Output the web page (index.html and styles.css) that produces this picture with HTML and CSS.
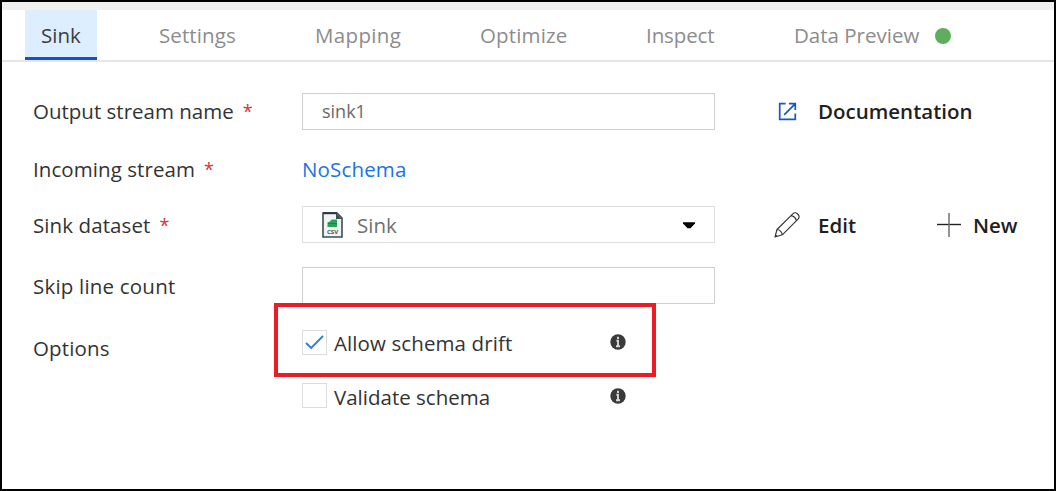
FILE: index.html
```
<!DOCTYPE html>
<html lang="en">
<head>
<meta charset="utf-8">
<title>Sink</title>
<link rel="stylesheet" href="styles.css">
</head>
<body>
<main class="panel">
  <div class="strip"></div>
  <nav class="tabs">
    <a class="tab active"><span class="t-sink">Sink</span></a>
    <a class="tab"><span class="t-settings">Settings</span></a>
    <a class="tab"><span class="t-mapping">Mapping</span></a>
    <a class="tab"><span class="t-optimize">Optimize</span></a>
    <a class="tab"><span class="t-inspect">Inspect</span></a>
    <a class="tab"><span class="t-preview">Data Preview</span><i class="dot"></i></a>
  </nav>
  <form class="form">
    <div class="row row-name">
      <label class="label"><span class="l-output">Output stream name</span><b class="req">*</b></label>
      <div class="field input"><span class="value">sink1</span></div>
      <div class="actions">
        <svg class="ext" width="19" height="19" viewBox="0 0 20 20" fill="none" stroke="#1458c8" stroke-width="1.8"><path d="M8 1.8H1.8V18.2H18.2V12M11.5 1.8H18.2V8.5M18 2L6.5 13.5"/></svg>
        <span class="action doc">Documentation</span>
      </div>
    </div>
    <div class="row row-stream">
      <label class="label"><span class="l-incoming">Incoming stream</span><b class="req">*</b></label>
      <a class="link">NoSchema</a>
    </div>
    <div class="row row-dataset">
      <label class="label"><span class="l-dataset">Sink dataset</span><b class="req">*</b></label>
      <div class="field select">
        <svg class="csv" width="21" height="26" viewBox="0 0 21 26"><path d="M1 1H15L20 6V25H1Z" fill="#f2f4f4" stroke="#3c4d52" stroke-width="1.6"/><path d="M1 1.2H15" stroke="#25363b" stroke-width="2"/><path d="M14 1L20 7H14Z" fill="#3c4d52"/><path d="M5.500 15V10.500L8 9.500L9.500 7.500H15V15Z" fill="#2aa35a"/><path d="M6 11.5H15" stroke="#17823f" stroke-width=".8"/><text class="csv-text" x="5" y="22">CSV</text></svg>
        <span class="select-value">Sink</span>
        <svg class="caret" width="12" height="7" viewBox="0 0 12 7"><path d="M0 .3H12V1.5L7.5 6.3H4.5L0 1.5Z" fill="#000"/></svg>
      </div>
      <div class="actions">
        <svg class="pencil" width="26" height="26" viewBox="0 0 26 26" fill="none" stroke="#333" stroke-width="1.15" stroke-linejoin="round"><path d="M1 25L3 17.5L18.8 1.8C20 .6 22 .5 23.6 2C25.300 3.600 25.300 5.800 24 7.200L8.300 22.800ZM3 17.500C5.500 17.500 8 20 8.300 22.800M17 3.600C19.500 3.800 22 6 22.300 8.800M1.500 23L3 24.500"/></svg>
        <span class="action edit">Edit</span>
        <svg class="plus" width="24" height="24" viewBox="0 0 24 24" fill="none" stroke="#222" stroke-width="1.4"><path d="M0 11.500H24"/><path d="M12 0V24" stroke="#666"/></svg>
        <span class="action new">New</span>
      </div>
    </div>
    <div class="row row-skip">
      <label class="label"><span class="l-skip">Skip line count</span></label>
      <div class="field input"></div>
    </div>
    <div class="row row-options">
      <label class="label"><span class="l-options">Options</span></label>
      <div class="checks">
        <div class="option highlight">
          <span class="box"><svg width="19" height="15" viewBox="0 0 19 15" fill="none" stroke="#2b7de9" stroke-width="1.9"><path d="M1 8L6.200 13L18 1"/></svg></span>
          <span class="option-text"><span class="o-drift">Allow schema drift</span></span>
          <svg class="info" width="16" height="16" viewBox="0 0 16 16"><circle cx="8" cy="8" r="7.700" fill="#3a3a3a"/><path d="M8 2.800V5M6.400 6.700H8V12M6 12.300H10" stroke="#d8d8d8" stroke-width="1.900" fill="none"/></svg>
        </div>
        <div class="option">
          <span class="box"></span>
          <span class="option-text"><span class="o-validate">Validate schema</span></span>
          <svg class="info" width="16" height="16" viewBox="0 0 16 16"><circle cx="8" cy="8" r="7.700" fill="#3a3a3a"/><path d="M8 2.800V5M6.400 6.700H8V12M6 12.300H10" stroke="#d8d8d8" stroke-width="1.900" fill="none"/></svg>
        </div>
      </div>
    </div>
  </form>
</main>
</body>
</html>
```
FILE: styles.css
```
* { box-sizing: border-box; }
body { margin: 0; background: #fff; }
.panel {
  width: 1056px; height: 491px; border: 2px solid #000; overflow: hidden;
  font-family: "Open Sans", "Noto Sans", sans-serif; font-size: 20.5px; line-height: 28px;
  color: #333; white-space: nowrap;
}
.strip { height: 8px; background: #f0f0f0; }
.tabs {
  display: flex; align-items: stretch; gap: 30px; height: 52px; padding-left: 23px;
  border-bottom: 2px solid #e6e6e6; color: #8c8c8c;
}
.tab { display: flex; align-items: center; height: 50px; padding: 0 16px; }
.tab.active { width: 72px; margin-right: 16px; background: #dceeff; border-bottom: 3px solid #0a54d8; color: #3c3c3c; padding-top: 3px; }
.tab span { display: block; }
.t-sink { width: 42px; letter-spacing: 0; }
.t-settings { width: 94px; letter-spacing: .1px; }
.t-mapping { width: 103px; letter-spacing: .35px; }
.t-optimize { width: 104px; letter-spacing: .15px; }
.t-inspect { width: 86px; letter-spacing: -.1px; }
.t-preview { width: 141px; letter-spacing: 0; }
.dot { width: 16px; height: 16px; margin-top: 2px; border-radius: 50%; background: #5fae5f; }
.form { padding: 20px 0 0 31px; }
.row { display: grid; grid-template-columns: 269px 413px 1fr; align-items: center; }
.row-name { height: 58px; }
.row-stream { height: 57px; }
.row-dataset { height: 55px; }
.row-skip { height: 67px; }
.row-options { height: 110px; align-items: start; }
.row-options .label { height: 58px; }
.label { display: flex; align-items: center; }
.l-incoming { letter-spacing: .07px; }
.l-dataset { letter-spacing: .1px; }
.l-skip { letter-spacing: .2px; }
.l-options { letter-spacing: .15px; }
.req { color: #d13438; font-size: 18px; font-weight: 400; margin-left: 9px; }
.field { display: flex; align-items: center; height: 37px; padding-left: 19px; border: 1.5px solid #cfcfcf; }
.value { font-size: 18px; color: #6a6a6a; }
.select { border-color: #dedede; padding: 0 19px 0 19px; }
.select-value { flex: 1; margin-left: 14px; color: #707070; }
.caret { margin-top: 2px; }
.csv-text { font: bold 6px "Open Sans", sans-serif; fill: #44555a; }
.link { color: #1a73e8; letter-spacing: .15px; }
.actions { display: flex; align-items: center; padding-left: 63px; }
.action { font-weight: 600; color: #1f1f1f; }
.doc { margin-left: 21px; }
.pencil { margin-left: -4px; }
.edit { width: 40px; margin-left: 18px; }
.plus { margin-left: 79px; }
.new { margin-left: 12px; }
.checks { margin-left: -28px; margin-top: -16px; }
.option { display: flex; align-items: center; width: 382px; height: 74px; padding-left: 28px; }
.option:not(.highlight) { height: 37px; }
.highlight { position: relative; background: #fff; padding-top: 4px; }
.highlight::after { content: ""; position: absolute; inset: 0; border: 4px solid #ed1c24; }
.box { display: flex; align-items: center; justify-content: center; width: 25px; height: 25px; border: 1.5px solid #dcdcdc; }
.option-text { width: 276px; margin-left: 7px; padding-top: 2px; }
.o-drift { letter-spacing: .1px; }
```
